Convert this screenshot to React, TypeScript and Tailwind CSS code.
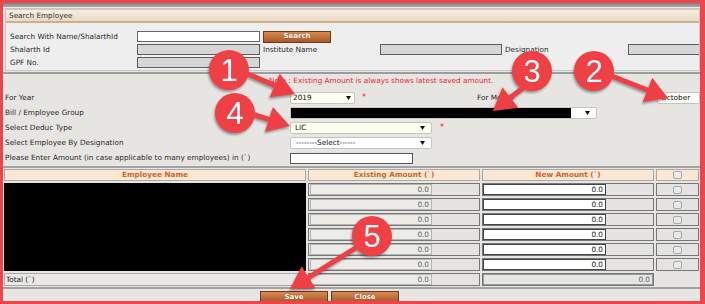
import React from "react";

// annotation arrows: shaft + triangle head as one polygon
function arrowPoints(x1: number, y1: number, x2: number, y2: number, sw = 5, hl = 22, hw = 26) {
  const dx = x2 - x1;
  const dy = y2 - y1;
  const len = Math.hypot(dx, dy);
  const ux = dx / len;
  const uy = dy / len;
  const px = -uy;
  const py = ux;
  const bx = x2 - ux * hl;
  const by = y2 - uy * hl;
  const pts = [
    [x1 + (px * sw) / 2, y1 + (py * sw) / 2],
    [bx + (px * sw) / 2, by + (py * sw) / 2],
    [bx + (px * hw) / 2, by + (py * hw) / 2],
    [x2, y2],
    [bx - (px * hw) / 2, by - (py * hw) / 2],
    [bx - (px * sw) / 2, by - (py * sw) / 2],
    [x1 - (px * sw) / 2, y1 - (py * sw) / 2],
  ];
  return pts.map((p) => p.join(",")).join(" ");
}

const arrows = [
  [248, 74, 295, 94],
  [252, 114, 290, 126],
  [528, 84, 493, 111],
  [612, 76, 668, 98],
  [357, 247, 290, 289],
];

const circles = [
  { n: "1", x: 229, y: 70 },
  { n: "2", x: 594, y: 71 },
  { n: "3", x: 532, y: 71 },
  { n: "4", x: 235, y: 113 },
  { n: "5", x: 372, y: 236 },
];

function Caret() {
  return (
    <svg width="5" height="4" viewBox="0 0 5 4" className="shrink-0">
      <path d="M0 0 L5 0 L2.5 4 Z" fill="#111" />
    </svg>
  );
}

function BrownButton({ label, w = "w-[68px]" }: { label: string; w?: string }) {
  return (
    <div
      className={`${w} h-[12px] flex items-center justify-center border border-[#6e3a18] bg-gradient-to-b from-[#d98a52] to-[#a9582a] text-white font-bold text-[7px] [text-shadow:0_0_1px_#5a2a0a]`}
    >
      {label}
    </div>
  );
}

const grayInput = "h-[11px] border border-[#5e5e5e] bg-[#d6d6d6]";

function AmountRow() {
  return (
    <>
      <div className="h-[13px] border border-[#777] bg-[#e4e3e1] pl-[1px] flex items-center">
        <div className="w-[122px] h-[11px] border border-[#b5b5b5] bg-[#ecebe6] text-right pr-[2px] text-[#666] leading-[9px]">
          0.0
        </div>
      </div>
      <div className="h-[13px] border border-[#777] bg-[#e4e3e1] flex items-center">
        <div className="w-[123px] h-[11px] border border-[#444] bg-white text-right pr-[2px] text-[#222] leading-[9px]">
          0.0
        </div>
      </div>
      <div className="h-[13px] border border-[#777] bg-[#e4e3e1] flex items-center justify-center">
        <div className="w-[9px] h-[8px] rounded-[2px] border border-[#a8a8a8] bg-[#e9e9e9]" />
      </div>
    </>
  );
}

export default function App() {
  return (
    <div className="relative w-[705px] h-[304px] overflow-hidden border-[3px] border-r-[5px] border-[#ef4449] bg-[#e7e5e2] font-['DejaVu_Sans',Verdana,sans-serif] text-[7.3px] text-[#2a2a2a] leading-none">
      {/* top bar */}
      <div className="h-[4px] bg-gradient-to-b from-[#7f7f7f] to-[#ababab]" />
      <div className="h-[1px] bg-[#eeeeee]" />

      {/* Search Employee panel */}
      <div className="ml-[2px] border border-[#c7c7c7] bg-[#eeeeee] pb-[2px] overflow-hidden">
        <div className="h-[14px] flex items-center pl-[3px] border-t border-[#dcc6a8] border-b-2 border-b-[#cfb08a] bg-gradient-to-b from-[#f6eee3] to-[#e9dac6] text-[#333]">
          Search Employee
        </div>
        <div className="pt-[8px] pl-[4px] flex flex-col gap-[2px]">
          <div className="flex items-center h-[11px] *:shrink-0">
            <div className="w-[127px]">Search With Name/ShalarthId</div>
            <div className="w-[123px] h-[11px] border border-[#666] bg-white" />
            <div className="ml-[3px]">
              <BrownButton label="Search" w="w-[68px]" />
            </div>
          </div>
          <div className="flex items-center h-[11px] *:shrink-0">
            <div className="w-[127px]">Shalarth Id</div>
            <div className={`w-[123px] ${grayInput}`} />
            <div className="w-[120px] pl-[3px]">Institute Name</div>
            <div className={`w-[122px] ${grayInput}`} />
            <div className="w-[126px] pl-[3px]">Designation</div>
            <div className={`w-[80px] ${grayInput}`} />
          </div>
          <div className="flex items-center h-[11px] *:shrink-0">
            <div className="w-[127px]">GPF No.</div>
            <div className={`w-[123px] ${grayInput}`} />
          </div>
        </div>
      </div>

      {/* deduction form */}
      <div className="mt-[1px] border-t-2 border-[#9d9d9d]">
        <div className="h-[9px] mt-[2px] flex items-center pl-[266px] text-[#e8262c]">
          Note : Existing Amount is always shows latest saved amount.
        </div>
        <div className="mt-[7px] pl-[2px] flex flex-col gap-[3px]">
          <div className="flex items-center h-[12px] *:shrink-0">
            <div className="w-[285px]">For Year</div>
            <div className="w-[65px] h-[12px] border border-[#c4c4c4] rounded-[2px] bg-[#fffef2] flex items-center justify-between pl-[2px] pr-[3px] text-[#111]">
              2019
              <Caret />
            </div>
            <div className="w-[122px] pl-[7px] text-[#e8262c] text-[8px]">*</div>
            <div className="w-[180px]">For Month</div>
            <div className="w-[43px] h-[12px] border border-[#c4c4c4] rounded-l-[2px] bg-[#fffef6] flex items-center pl-[3px] text-[#111]">
              October
            </div>
          </div>
          <div className="flex items-center h-[12px] *:shrink-0">
            <div className="w-[285px]">Bill / Employee Group</div>
            <div className="w-[307px] h-[12px] border border-[#c4c4c4] rounded-[2px] bg-white flex items-center pr-[6px]">
              <div className="w-[280px] h-[10px] bg-black" />
              <div className="flex-1" />
              <Caret />
            </div>
          </div>
          <div className="flex items-center h-[12px] *:shrink-0">
            <div className="w-[285px]">Select Deduc Type</div>
            <div className="w-[142px] h-[12px] border border-[#c4c4c4] rounded-[2px] bg-[#fffff0] flex items-center justify-between pl-[4px] pr-[6px] text-[#111]">
              LIC
              <Caret />
            </div>
            <div className="pl-[8px] text-[#e8262c] text-[8px]">*</div>
          </div>
          <div className="flex items-center h-[12px] *:shrink-0">
            <div className="w-[285px]">Select Employee By Designation</div>
            <div className="w-[142px] h-[12px] border border-[#c4c4c4] rounded-[2px] bg-white flex items-center justify-between pl-[5px] pr-[6px] text-[#111]">
              --------Select------
              <Caret />
            </div>
          </div>
          <div className="flex items-center h-[12px] *:shrink-0">
            <div className="w-[285px]">Please Enter Amount (in case applicable to many employees) in (`)</div>
            <div className="w-[123px] h-[11px] border border-[#555] bg-white" />
          </div>
        </div>

        {/* employees table */}
        <div className="mt-[2px] border-t-2 border-[#a3a3a3] pt-[1px] pl-[1px]">
          <div className="grid grid-cols-[302px_172px_172px_43px] gap-x-[2px] gap-y-[2px]">
            <div className="h-[12px] border border-[#a9a9a9] bg-[#fbe7d4] flex items-center justify-center font-bold text-[#c8692a]">
              Employee Name
            </div>
            <div className="h-[12px] border border-[#a9a9a9] bg-[#fbe7d4] flex items-center justify-center font-bold text-[#c8692a]">
              Existing Amount (`)
            </div>
            <div className="h-[12px] border border-[#a9a9a9] bg-[#fbe7d4] flex items-center justify-center font-bold text-[#c8692a]">
              New Amount (`)
            </div>
            <div className="h-[12px] border border-[#a9a9a9] bg-[#fbe7d4] flex items-center justify-center">
              <div className="w-[9px] h-[8px] rounded-[2px] border border-[#a8a8a8] bg-[#ededed]" />
            </div>

            <div className="row-span-6 bg-black" />
            {[0, 1, 2, 3, 4, 5].map((i) => (
              <React.Fragment key={i}>
                <AmountRow />
              </React.Fragment>
            ))}

            <div className="h-[13px] border border-[#aaa] bg-[#e9e8e6] flex items-center pl-[1px] text-[#222]">
              Total (`)
            </div>
            <div className="h-[13px] border border-[#777] bg-[#e4e3e1] pl-[1px] flex items-center">
              <div className="w-[122px] h-[11px] border border-[#b5b5b5] bg-[#ecebe6] text-right pr-[2px] text-[#666] leading-[9px]">
                0.0
              </div>
            </div>
            <div className="h-[13px] border border-[#777] bg-[#e4e3e1] flex items-center">
              <div className="w-full h-[11px] border border-[#9a9a9a] bg-[#e6e6e4] text-right pr-[2px] text-[#666] leading-[9px]">
                0.0
              </div>
            </div>
            <div />
          </div>
        </div>

        <div className="mt-[1px] border-t-2 border-[#a3a3a3] pt-[2px] pl-[257px] flex gap-[3px]">
          <BrownButton label="Save" />
          <BrownButton label="Close" />
        </div>
      </div>

      {/* callouts */}
      <svg
        className="absolute left-[-3px] top-[-3px] pointer-events-none drop-shadow-[-1px_2px_1px_rgba(0,0,0,0.35)]"
        width="705"
        height="304"
        viewBox="0 0 705 304"
      >
        {arrows.map(([x1, y1, x2, y2], i) => (
          <polygon key={i} points={arrowPoints(x1, y1, x2, y2)} fill="#ef3f45" />
        ))}
        {circles.map((c) => (
          <g key={c.n}>
            <circle cx={c.x} cy={c.y} r="20" fill="#ef4046" />
            <text
              x={c.x}
              y={c.y + 11}
              textAnchor="middle"
              fontSize="31"
              fill="#fff"
              fontFamily="'Liberation Sans', Arial, sans-serif"
            >
              {c.n}
            </text>
          </g>
        ))}
      </svg>
    </div>
  );
}
